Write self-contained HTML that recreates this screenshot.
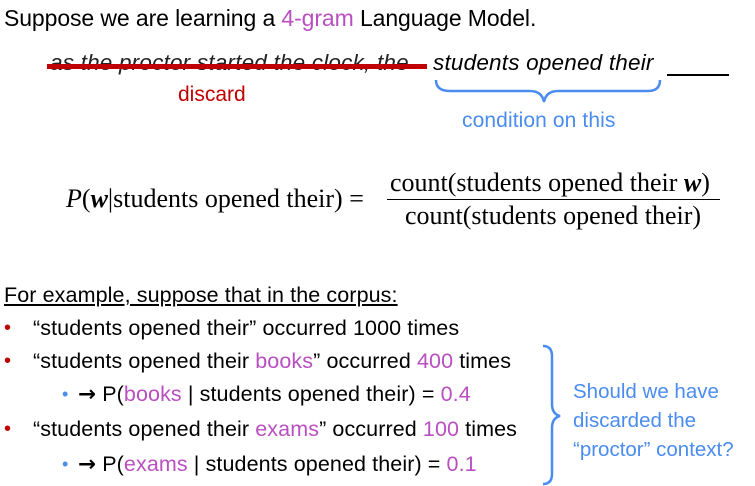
<!DOCTYPE html>
<html><head><meta charset="utf-8"><style>
body{margin:0;width:755px;height:486px;background:#fff;position:relative;overflow:hidden;font-family:"Liberation Sans",sans-serif;color:#000}
.a{position:absolute;white-space:nowrap;line-height:1}
.p{color:#b94fc0}
.b{color:#4a8cf0}
.t{font-size:21.5px;letter-spacing:0.1px}
.f{font-family:"Liberation Serif",serif;font-size:26px}
</style></head><body>
<div class="a" style="left:4px;top:7px;font-size:23px;letter-spacing:-0.1px">Suppose we are learning a <span class="p">4-gram</span> Language Model.</div>
<div class="a" style="left:50px;top:52px;font-size:22.5px;letter-spacing:0.2px;font-style:italic;color:#222">as the proctor started the clock, the</div>
<div class="a" style="left:47px;top:64px;width:380px;height:5px;background:#c00000"></div>
<div class="a" style="left:433px;top:52px;font-size:22.5px;font-style:italic;letter-spacing:0.2px">students opened their</div>
<div class="a" style="left:667px;top:74px;width:62px;height:2px;background:#000"></div>
<div class="a" style="left:178px;top:84px;font-size:21px;color:#c00000">discard</div>
<svg class="a" style="left:430px;top:78px" width="240" height="26"><path d="M6 2 Q6 13 20 13 L100 13 Q112 13 114 24 Q116 13 128 13 L218 13 Q230 13 230 2" fill="none" stroke="#4a8cf0" stroke-width="2.5"/></svg>
<div class="a b" style="left:462px;top:110px;font-size:21px;letter-spacing:0.1px">condition on this</div>
<div class="a f" style="left:66px;top:186px"><i>P</i>(<b><i>w</i></b>|students opened their) =</div>
<div class="a f" style="left:390px;top:170px">count(students opened their <b><i>w</i></b>)</div>
<div class="a" style="left:387px;top:199px;width:333px;height:1px;background:#000"></div>
<div class="a f" style="left:405px;top:203px">count(students opened their)</div>
<div class="a t" style="left:4px;top:285px;text-decoration:underline">For example, suppose that in the corpus:</div>
<div class="a" style="left:4px;top:318px;font-size:20px;color:#c00000">•</div>
<div class="a t" style="left:33px;top:318px">“students opened their” occurred 1000 times</div>
<div class="a" style="left:4px;top:351px;font-size:20px;color:#c00000">•</div>
<div class="a t" style="left:33px;top:351px">“students opened their <span class="p">books</span>” occurred <span class="p">400</span> times</div>
<div class="a b" style="left:62px;top:385px;font-size:18px">•</div>
<div class="a t" style="left:78px;top:384px"><b style="font-family:'DejaVu Sans'">→</b> P(<span class="p">books</span> | students opened their) = <span class="p">0.4</span></div>
<div class="a" style="left:4px;top:419px;font-size:20px;color:#c00000">•</div>
<div class="a t" style="left:33px;top:419px">“students opened their <span class="p">exams</span>” occurred <span class="p">100</span> times</div>
<div class="a b" style="left:62px;top:455px;font-size:18px">•</div>
<div class="a t" style="left:78px;top:454px"><b style="font-family:'DejaVu Sans'">→</b> P(<span class="p">exams</span> | students opened their) = <span class="p">0.1</span></div>
<svg class="a" style="left:540px;top:344px" width="30" height="142"><path d="M3 2 Q12 2 12 12 L12 60 Q12 70 20 72 Q12 74 12 84 L12 130 Q12 140 3 140" fill="none" stroke="#4a8cf0" stroke-width="2.5"/></svg>
<div class="a b" style="left:573px;top:377px;font-size:20.5px;line-height:29px;white-space:normal;width:190px">Should we have<br>discarded the<br>“proctor” context?</div>
</body></html>
